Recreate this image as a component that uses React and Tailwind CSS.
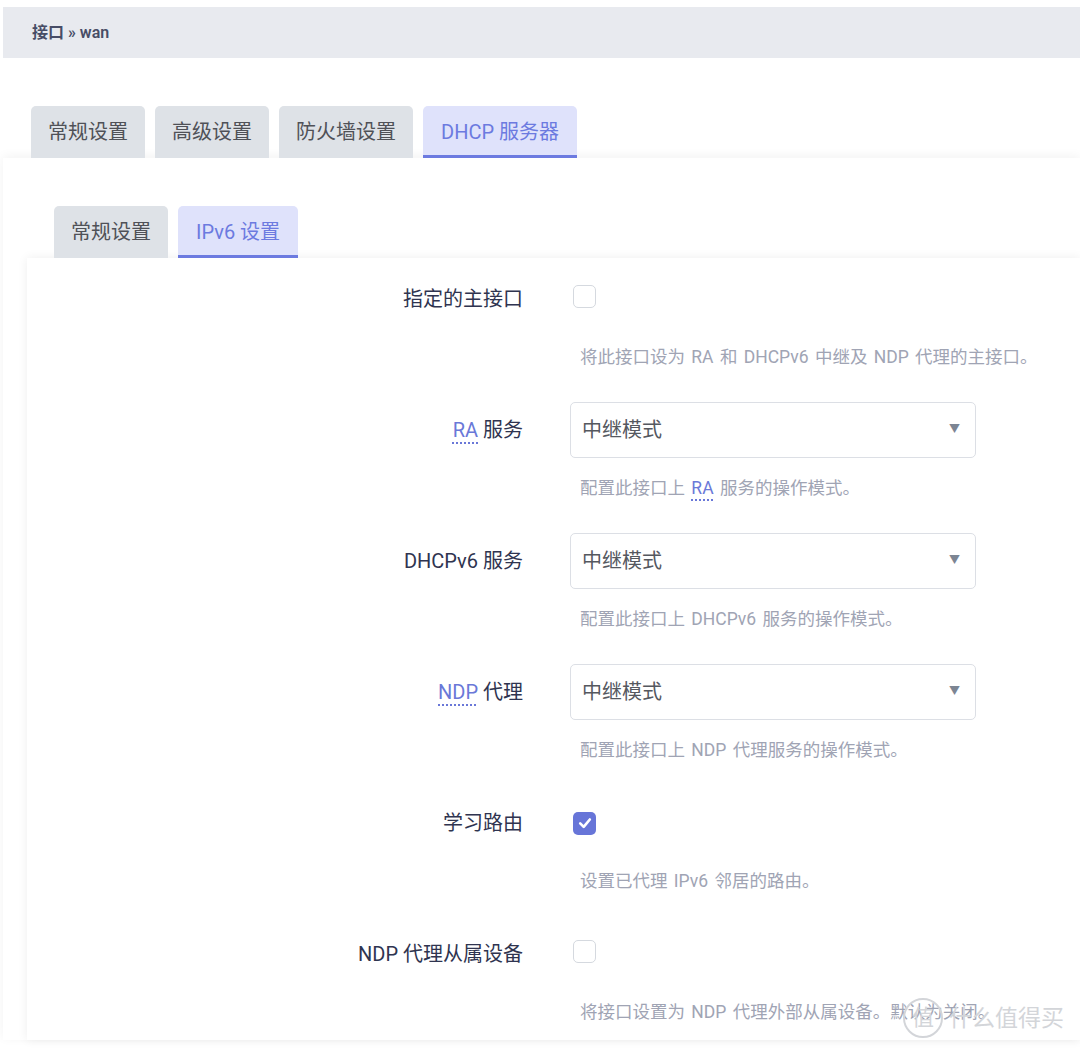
import {useState} from 'react'

const font = {fontFamily: '"Roboto", "Noto Sans CJK SC", sans-serif'}

function Abbr({children}) {
    return (
      <span className="text-[#6a78d8] underline decoration-dotted decoration-2 decoration-[#6a78d8] underline-offset-[5px]">
          {children}
      </span>
    )
}

function Tab({label, active = false}) {
    if (active) {
        return (
          <div className="h-[52px] px-[18px] flex items-center rounded-t-[5px] bg-[#dfe2fb] text-[#6c7ae0] text-[20px] border-b-[3px] border-[#6c7ae0] pt-[3px]">
              {label}
          </div>
        )
    }
    return (
      <div className="h-[52px] px-[17px] flex items-center rounded-t-[5px] bg-[#dee2e7] text-[#4f5157] text-[20px]">
          {label}
      </div>
    )
}

function Checkbox({checked, onChange}) {
    return (
      <button
        type="button"
        onClick={onChange}
        className={
          checked
            ? 'ml-[3px] w-[23px] h-[23px] rounded-[5px] bg-[#6775d8] flex items-center justify-center'
            : 'ml-[3px] w-[23px] h-[23px] rounded-[5px] border border-[#d5d9df] bg-white'
        }
      >
          {checked && (
            <svg width="14" height="14" viewBox="0 0 16 16">
                <path d="M2.5 8.5 L6.5 12.5 L13.5 4" fill="none" stroke="white" strokeWidth="3" strokeLinecap="round" strokeLinejoin="round" />
            </svg>
          )}
      </button>
    )
}

function Select({value}) {
    return (
      <div className="w-[406px] h-[56px] rounded-[5px] border border-[#dcdfe5] bg-white flex items-center justify-between pl-[11px] pr-[15px]">
          <span className="text-[20px] text-[#55585f]">{value}</span>
          <span className="text-[11px] text-[#7c8593]">▼</span>
      </div>
    )
}

function Row({label, control, desc, last = false}) {
    return (
      <div className={last ? 'pb-[18px]' : 'pb-[35px]'}>
          <div className="flex items-center h-[56px]">
              <div className="w-[496px] text-right text-[20px] text-[#2f3450] leading-none">
                  {label}
              </div>
              <div className="ml-[47px]">{control}</div>
          </div>
          <div className="ml-[553px] mt-[20px] leading-[20px] text-[17.5px] text-[#a0a4b4] whitespace-nowrap [word-spacing:2px]">
              {desc}
          </div>
      </div>
    )
}

export default function App() {
    const [master, setMaster] = useState(false)
    const [learn, setLearn] = useState(true)
    const [slave, setSlave] = useState(false)

    return (
      <div className="relative min-h-[1050px] bg-white overflow-hidden" style={font}>
          <div className="pl-[3px] pt-[7px]">
              <div className="h-[51px] bg-[#e8eaef] flex items-center pl-[29px] text-[16px] font-semibold text-[#474d66]">
                  接口 » wan
              </div>
          </div>

          <div className="pl-[3px] mt-[48px]">
              <div className="flex gap-[10px] pl-[28px]">
                  <Tab label="常规设置" />
                  <Tab label="高级设置" />
                  <Tab label="防火墙设置" />
                  <Tab label="DHCP 服务器" active />
              </div>

              <div className="bg-white shadow-[0_-2px_10px_rgba(0,0,0,0.05)] pt-[48px] pl-[24px]">
                  <div className="flex gap-[10px] pl-[27px]">
                      <Tab label="常规设置" />
                      <Tab label="IPv6 设置" active />
                  </div>

                  <div className="bg-white shadow-[0_0_10px_rgba(0,0,0,0.07)] pt-[13px]">
                      <Row
                        label="指定的主接口"
                        control={<Checkbox checked={master} onChange={() => setMaster(!master)} />}
                        desc="将此接口设为 RA 和 DHCPv6 中继及 NDP 代理的主接口。"
                      />
                      <Row
                        label={<><Abbr>RA</Abbr> 服务</>}
                        control={<Select value="中继模式" />}
                        desc={<>配置此接口上 <Abbr>RA</Abbr> 服务的操作模式。</>}
                      />
                      <Row
                        label="DHCPv6 服务"
                        control={<Select value="中继模式" />}
                        desc="配置此接口上 DHCPv6 服务的操作模式。"
                      />
                      <Row
                        label={<><Abbr>NDP</Abbr> 代理</>}
                        control={<Select value="中继模式" />}
                        desc="配置此接口上 NDP 代理服务的操作模式。"
                      />
                      <Row
                        label="学习路由"
                        control={<Checkbox checked={learn} onChange={() => setLearn(!learn)} />}
                        desc="设置已代理 IPv6 邻居的路由。"
                      />
                      <Row
                        label="NDP 代理从属设备"
                        control={<Checkbox checked={slave} onChange={() => setSlave(!slave)} />}
                        desc="将接口设置为 NDP 代理外部从属设备。默认为关闭。"
                        last
                      />
                  </div>
              </div>
          </div>

          {/* watermark */}
          <div className="absolute left-[903px] top-[998px] flex items-center gap-[6px] text-[#d3d5d9] pointer-events-none whitespace-nowrap">
              <div className="w-[40px] h-[40px] rounded-full border-2 border-[#d3d5d9] flex items-center justify-center text-[22px] leading-none">
                  值
              </div>
              <div className="text-[23px] leading-none">什么值得买</div>
          </div>
      </div>
    )
}
